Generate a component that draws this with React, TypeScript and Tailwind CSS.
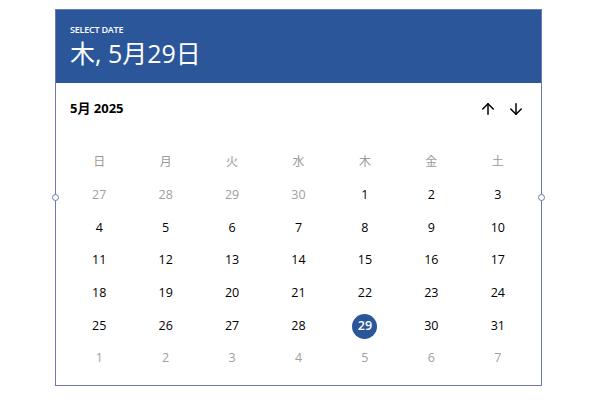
import { ArrowUp, ArrowDown } from 'lucide-react';

const weekdays = ['日', '月', '火', '水', '木', '金', '土'];

type Day = { n: number; out?: boolean };

const weeks: Day[][] = [
  [{ n: 27, out: true }, { n: 28, out: true }, { n: 29, out: true }, { n: 30, out: true }, { n: 1 }, { n: 2 }, { n: 3 }],
  [{ n: 4 }, { n: 5 }, { n: 6 }, { n: 7 }, { n: 8 }, { n: 9 }, { n: 10 }],
  [{ n: 11 }, { n: 12 }, { n: 13 }, { n: 14 }, { n: 15 }, { n: 16 }, { n: 17 }],
  [{ n: 18 }, { n: 19 }, { n: 20 }, { n: 21 }, { n: 22 }, { n: 23 }, { n: 24 }],
  [{ n: 25 }, { n: 26 }, { n: 27 }, { n: 28 }, { n: 29 }, { n: 30 }, { n: 31 }],
  [{ n: 1, out: true }, { n: 2, out: true }, { n: 3, out: true }, { n: 4, out: true }, { n: 5, out: true }, { n: 6, out: true }, { n: 7, out: true }],
];

const font = { fontFamily: '"Open Sans", "Noto Sans CJK JP", sans-serif' };

export default function App() {
  return (
    <div className="w-[600px] h-[400px] bg-white pt-[9px] pl-[55px]" style={font}>
      <div className="relative w-[487px] h-[377px] border border-[#7078b4]">
        <span className="absolute left-[-4px] top-[184px] w-[7px] h-[7px] rounded-full border border-[#7078b4] bg-white" />
        <span className="absolute right-[-4px] top-[184px] w-[7px] h-[7px] rounded-full border border-[#7078b4] bg-white" />

        <div className="h-[73px] bg-[#2b579a] text-white px-[14px] pt-[15px]">
          <div className="text-[9px] font-semibold leading-[10px] tracking-tight">SELECT DATE</div>
          <div className="text-[25px] leading-[32px] mt-[2px]">木, 5月29日</div>
        </div>

        <div className="flex items-center justify-between h-[52px] pl-[14px] pr-[16px]">
          <span className="text-[13px] font-bold text-black">5月 2025</span>
          <div className="flex items-center gap-[10px] text-black">
            <ArrowUp size={18} strokeWidth={2} />
            <ArrowDown size={18} strokeWidth={2} />
          </div>
        </div>

        <div className="px-[10px] mt-[10px]">
          <div className="grid grid-cols-7 h-[34px] items-center">
            {weekdays.map((w) => (
              <div key={w} className="text-center text-[12px] text-[#9a9a9a]">{w}</div>
            ))}
          </div>
          {weeks.map((week, i) => (
            <div key={i} className="grid grid-cols-7 h-[32.7px] items-center">
              {week.map((d, j) => {
                const selected = i === 4 && d.n === 29;
                return (
                  <div key={j} className="flex justify-center">
                    {selected ? (
                      <span className="flex items-center justify-center w-[25px] h-[25px] rounded-full bg-[#2b579a] text-white text-[12.5px] font-semibold">
                        {d.n}
                      </span>
                    ) : (
                      <span className={`text-[12.5px] ${d.out ? 'text-[#a0a0a0]' : 'text-black'}`}>{d.n}</span>
                    )}
                  </div>
                );
              })}
            </div>
          ))}
        </div>
      </div>
    </div>
  );
}
